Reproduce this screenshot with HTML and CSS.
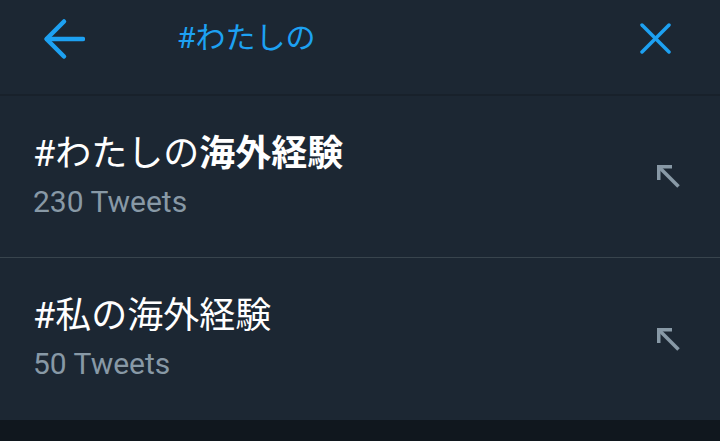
FILE: index.html
```html
<!DOCTYPE html>
<html lang="ja">

<head>
	<meta charset="UTF-8">
	<meta name="viewport" content="width=device-width, initial-scale=1.0">
	<title>#わたしの</title>
	<link rel="stylesheet" href="styles.css">
</head>

<body>
	<div id="search-bar">
		<button class="icon-btn back" aria-label="Back">
			<svg width="42" height="42" viewBox="0 0 42 42" fill="none" stroke="#1da1f2" stroke-width="4.5"
				stroke-linecap="round" stroke-linejoin="round">
				<path d="M40 21H4" />
				<path d="M21 3.5L3.5 21L21 38.5" />
			</svg>
		</button>
		<div id="query">#わたしの</div>
		<button class="icon-btn clear" aria-label="Clear">
			<svg width="31" height="31" viewBox="0 0 31 31" fill="none" stroke="#1da1f2" stroke-width="3.5"
				stroke-linecap="round">
				<path d="M2 2L29 29" />
				<path d="M29 2L2 29" />
			</svg>
		</button>
	</div>

	<ul id="suggestions">
		<li class="suggestion">
			<div class="text">
				<div class="tag">#わたしの<b>海外経験</b></div>
				<div class="count">230 Tweets</div>
			</div>
			<svg class="fill-in" width="23" height="23" viewBox="0 0 23 23" fill="none" stroke="#8899a6"
				stroke-width="3.5">
				<path d="M1.75 15V1.75H15" />
				<path d="M1.75 1.75L21.5 21.5" />
			</svg>
		</li>
		<li class="suggestion">
			<div class="text">
				<div class="tag">#私の海外経験</div>
				<div class="count">50 Tweets</div>
			</div>
			<svg class="fill-in" width="23" height="23" viewBox="0 0 23 23" fill="none" stroke="#8899a6"
				stroke-width="3.5">
				<path d="M1.75 15V1.75H15" />
				<path d="M1.75 1.75L21.5 21.5" />
			</svg>
		</li>
	</ul>

	<div id="footer"></div>
</body>

</html>
```

FILE: styles.css
```css
html,
body {
	margin: 0;
	padding: 0;
	width: 100%;
	height: 100%;
	background-color: #10171e;
	font-family: Roboto, "Noto Sans CJK JP", sans-serif;
	color: white;
}

#search-bar {
	display: flex;
	align-items: center;
	box-sizing: border-box;
	height: 96px;
	padding: 0 49px 18px 43px;
	background-color: #1c2733;
	border-bottom: 2px solid #18212b;
}

.icon-btn {
	display: flex;
	padding: 0;
	border: none;
	background: none;
}

.icon-btn.back {
	margin-top: 2px;
}

#query {
	flex: 1;
	margin-left: 92px;
	font-size: 30px;
	line-height: 36px;
	color: #1da1f2;
}

.icon-btn.clear {
	margin-top: 1px;
}

#suggestions {
	list-style: none;
	margin: 0;
	padding: 0;
	background-color: #1c2733;
}

.suggestion {
	display: flex;
	align-items: center;
	height: 161px;
	padding: 0 40px 0 33px;
	border-bottom: 1px solid #38444d;
}

.suggestion:last-child {
	border-bottom: none;
	height: 162px;
}

.text {
	flex: 1;
	margin-top: -3px;
}

.tag {
	font-size: 36px;
	line-height: 44px;
}

.tag b {
	font-weight: 700;
}

.count {
	margin-top: 9px;
	font-size: 30px;
	line-height: 34px;
	color: #8899a6;
}

.fill-in {
	margin-top: 0;
}

#footer {
	height: 21px;
}
```
